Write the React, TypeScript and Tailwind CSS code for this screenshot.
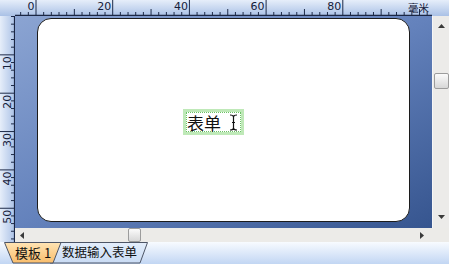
const PX = 3.835;

function TopRuler() {
  const marks = [];
  for (let mm = -4; mm <= 102; mm += 2) {
    const x = 21 + mm * PX;
    if (x > 416) break;
    const major = mm % 20 === 0 && mm >= 0 && mm <= 80;
    const medium = !major && mm % 10 === 0;
    marks.push(
      <g key={mm}>
        <line
          x1={x}
          x2={x}
          y1={major ? 0 : medium ? 9 : 12}
          y2={15}
          stroke="#1d2a48"
          strokeWidth={1}
        />
        {major && (
          <text x={x - 1.5} y={10} textAnchor="end" fontSize={11} fill="#14203a" fontFamily="DejaVu Sans, sans-serif">
            {mm}
          </text>
        )}
      </g>
    );
  }
  return (
    <svg width={434} height={16} className="block">
      <defs>
        <linearGradient id="rt" x1="0" y1="0" x2="0" y2="1">
          <stop offset="0" stopColor="#e6eefa" />
          <stop offset="1" stopColor="#aac1e6" />
        </linearGradient>
      </defs>
      <rect width={434} height={16} fill="url(#rt)" />
      {marks}
      <text x={393} y={12} fontSize={10.5} fill="#14203a" fontFamily="Noto Sans CJK SC, sans-serif">
        毫米
      </text>
      <line x1={0} x2={417} y1={15.5} y2={15.5} stroke="#1b2744" strokeWidth={1.4} />
    </svg>
  );
}

function LeftRuler() {
  const marks = [];
  for (let mm = 0; mm <= 58; mm += 2) {
    const y = 0.5 + mm * PX;
    const major = mm % 10 === 0 && mm > 0;
    marks.push(
      <g key={mm}>
        <line x1={major ? 0 : 11} x2={14} y1={y} y2={y} stroke="#1d2a48" strokeWidth={1} />
        {major && (
          <text
            transform={`translate(11 ${y + 1.5}) rotate(-90)`}
            textAnchor="end"
            fontSize={11}
            fill="#14203a"
            fontFamily="DejaVu Sans, sans-serif"
          >
            {mm}
          </text>
        )}
      </g>
    );
  }
  return (
    <svg width={15} height={226} className="block">
      <defs>
        <linearGradient id="rl" x1="0" y1="0" x2="1" y2="0">
          <stop offset="0" stopColor="#e6eefa" />
          <stop offset="1" stopColor="#aac1e6" />
        </linearGradient>
      </defs>
      <rect width={15} height={226} fill="url(#rl)" />
      {marks}
      <line x1={14.5} x2={14.5} y1={0} y2={226} stroke="#1b2744" strokeWidth={1.2} />
    </svg>
  );
}

function Arrow({ dir }: { dir: "up" | "down" | "left" | "right" }) {
  const pts = {
    up: "0,4 7,4 3.5,0",
    down: "0,0 7,0 3.5,4",
    left: "4,0 4,7 0,3.5",
    right: "0,0 0,7 4,3.5",
  }[dir];
  const vertical = dir === "up" || dir === "down";
  return (
    <svg width={vertical ? 7 : 4} height={vertical ? 4 : 7} className="block">
      <polygon points={pts} fill="#3a3a3a" />
    </svg>
  );
}

function Thumb({ className }: { className: string }) {
  return (
    <div
      className={`rounded-[2px] border border-[#9c9c9c] bg-linear-to-b from-[#fbfbfb] to-[#d7d7d7] ${className}`}
    />
  );
}

function IBeam() {
  return (
    <svg width={9} height={17} viewBox="0 0 9 17" className="block shrink-0">
      <path
        d="M1 1 Q4.5 1 4.5 3 Q4.5 1 8 1 M4.5 3 V14 M1 16 Q4.5 16 4.5 14 Q4.5 16 8 16 M3 8.5 H6"
        fill="none"
        stroke="#111"
        strokeWidth={1.2}
      />
    </svg>
  );
}

function Tabs() {
  return (
    <div className="relative h-[22px] bg-linear-to-b from-[#f8fbff] to-[#c2d6f3]">
      <svg width={160} height={22} className="absolute left-0 top-0">
        <defs>
          <linearGradient id="t1" x1="0" y1="0" x2="0" y2="1">
            <stop offset="0" stopColor="#ffe4b4" />
            <stop offset="1" stopColor="#f9bd6c" />
          </linearGradient>
          <linearGradient id="t2" x1="0" y1="0" x2="0" y2="1">
            <stop offset="0" stopColor="#e4eefb" />
            <stop offset="1" stopColor="#c9dbf4" />
          </linearGradient>
        </defs>
        <polygon points="54,0.5 147.5,0.5 140,21 50,21" fill="url(#t2)" stroke="#4d5566" strokeWidth={1} />
        <polygon points="4.5,0.5 61,0.5 53,21 13,21" fill="url(#t1)" stroke="#4d5566" strokeWidth={1} />
      </svg>
      <div className="relative flex h-full items-center pb-[1px] text-[13px] leading-none text-[#111] font-['Noto_Sans_CJK_SC',sans-serif]">
        <span className="ml-[15px] w-[47px]">模板 1</span>
        <span className="text-[12.5px]">数据输入表单</span>
      </div>
    </div>
  );
}

export default function App() {
  return (
    <div className="flex h-[264px] w-[449px] flex-col overflow-hidden bg-white font-['DejaVu_Sans',sans-serif]">
      <div className="flex h-[16px]">
        <div className="h-[16px] w-[15px] bg-linear-to-b from-[#e6eefa] to-[#aac1e6]" />
        <TopRuler />
      </div>
      <div className="flex h-[226px]">
        <LeftRuler />
        <div className="flex flex-1 flex-col">
          <div className="flex h-[212px]">
            <div className="h-full w-[417px] bg-linear-to-br from-[#8ba4d2] via-[#6482bc] to-[#36558f] pl-[22px] pt-[2px]">
              <div className="relative h-[204px] w-[373px] rounded-[14px] border border-[#1c1c1c] bg-white">
                <div className="absolute left-[145px] top-[90px] border-[3px] border-[#bfe9b8]">
                  <div className="flex h-[20px] w-[55px] items-center gap-[8px] whitespace-nowrap border border-dotted border-[#6cc266] font-['Noto_Sans_CJK_SC',sans-serif] text-[17px] leading-none text-[#111]">
                    <span className="shrink-0">表单</span>
                    <IBeam />
                  </div>
                </div>
              </div>
            </div>
            <div className="flex h-full w-[17px] flex-col items-center bg-[#ecebe9] border-l border-[#f6f6f6]">
              <div className="mt-[8px]">
                <Arrow dir="up" />
              </div>
              <Thumb className="mt-[45px] h-[16px] w-[15px]" />
              <div className="mt-auto mb-[9px]">
                <Arrow dir="down" />
              </div>
            </div>
          </div>
          <div className="flex h-[14px] items-center bg-[#ecebe8]">
            <div className="ml-[5px]">
              <Arrow dir="left" />
            </div>
            <Thumb className="ml-[104px] h-[14px] w-[13px]" />
            <div className="ml-auto mr-[25px]">
              <Arrow dir="right" />
            </div>
          </div>
        </div>
      </div>
      <Tabs />
    </div>
  );
}
